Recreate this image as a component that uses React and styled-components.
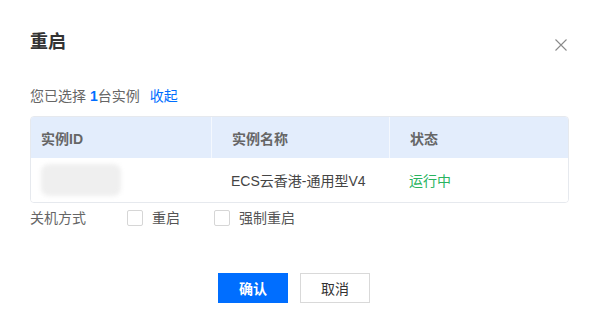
import React from "react";
import styled, { createGlobalStyle } from "styled-components";

const Global = createGlobalStyle`
  html, body { margin: 0; padding: 0; background: #fff; }
  body { font-family: "Liberation Sans", "Noto Sans CJK SC", sans-serif; -webkit-font-smoothing: antialiased; }
`;

const Dialog = styled.div`
  width: 599px;
  height: 332px;
  box-sizing: border-box;
  padding: 30px 30px 0 30px;
  background: #fff;
  display: flex;
  flex-direction: column;
`;

const Header = styled.div`
  display: flex;
  justify-content: space-between;
  align-items: flex-start;
  height: 24px;
`;

const Title = styled.h2`
  margin: 0;
  font-size: 18px;
  line-height: 24px;
  font-weight: 700;
  color: #333;
`;

const Close = styled.button`
  border: 0;
  background: transparent;
  padding: 0;
  margin: 9px 2px 0 0;
  width: 12px;
  height: 12px;
  display: flex;
  cursor: pointer;
`;

const Summary = styled.div`
  margin-top: 32px;
  font-size: 14px;
  line-height: 20px;
  color: #666;
  display: flex;
  align-items: center;
`;

const Count = styled.b`
  color: #006eff;
  font-weight: 700;
  margin-left: 4px;
`;

const Link = styled.a`
  color: #006eff;
  margin-left: 10px;
  text-decoration: none;
  cursor: pointer;
`;

const Table = styled.div`
  margin-top: 10px;
  border: 1px solid #e6e9ee;
  border-radius: 4px;
  overflow: hidden;
`;

const Row = styled.div`
  display: grid;
  grid-template-columns: 180px 178px 1fr;
  height: ${(p) => (p.$head ? "41px" : "44px")};
  background: ${(p) => (p.$head ? "#e3edfc" : "#fff")};
`;

const Cell = styled.div`
  display: flex;
  align-items: center;
  padding-left: ${(p) => (p.$first ? "10px" : "20px")};
  font-size: 14px;
  font-weight: ${(p) => (p.$head ? 700 : 400)};
  color: ${(p) => p.$color || (p.$head ? "#666" : "#444")};
  border-left: ${(p) => (p.$head && !p.$first ? "1px solid #f4f8fe" : "none")};
`;

const Blur = styled.div`
  width: 80px;
  height: 32px;
  background: #efefef;
  border-radius: 8px;
  filter: blur(2px);
`;

const Options = styled.div`
  margin-top: 5px;
  display: flex;
  align-items: center;
  font-size: 14px;
  line-height: 20px;
  color: #666;
`;

const Label = styled.span`
  width: 97px;
`;

const Check = styled.label`
  display: flex;
  align-items: center;
  gap: 9px;
  margin-right: ${(p) => p.$mr || "0"};
  color: #555;
  cursor: pointer;
`;

const Box = styled.span`
  width: 14px;
  height: 14px;
  border: 1px solid #d6d6d6;
  border-radius: 2px;
  background: #fff;
`;

const Footer = styled.div`
  margin-top: 45px;
  display: flex;
  gap: 12px;
  padding-left: 188px;
`;

const Button = styled.button`
  width: 70px;
  height: 30px;
  box-sizing: border-box;
  font-family: inherit;
  font-size: 14px;
  font-weight: ${(p) => (p.$primary ? 700 : 400)};
  border: 1px solid ${(p) => (p.$primary ? "#006eff" : "#d9d9d9")};
  background: ${(p) => (p.$primary ? "#006eff" : "#fff")};
  color: ${(p) => (p.$primary ? "#fff" : "#333")};
  cursor: pointer;
  padding: 0;
`;

export default function App() {
  return (
    <>
      <Global />
      <Dialog>
        <Header>
          <Title>重启</Title>
          <Close aria-label="关闭">
            <svg width="12" height="12" viewBox="0 0 12 12">
              <path d="M0.5 0.5 L11.5 11.5 M11.5 0.5 L0.5 11.5" stroke="#8a8a8a" strokeWidth="1.1" />
            </svg>
          </Close>
        </Header>
        <Summary>
          您已选择<Count>1</Count>台实例<Link>收起</Link>
        </Summary>
        <Table>
          <Row $head>
            <Cell $head $first>实例ID</Cell>
            <Cell $head>实例名称</Cell>
            <Cell $head>状态</Cell>
          </Row>
          <Row>
            <Cell $first><Blur /></Cell>
            <Cell>ECS云香港-通用型V4</Cell>
            <Cell $color="#29b45f">运行中</Cell>
          </Row>
        </Table>
        <Options>
          <Label>关机方式</Label>
          <Check $mr="34px"><Box />重启</Check>
          <Check><Box />强制重启</Check>
        </Options>
        <Footer>
          <Button $primary>确认</Button>
          <Button>取消</Button>
        </Footer>
      </Dialog>
    </>
  );
}
